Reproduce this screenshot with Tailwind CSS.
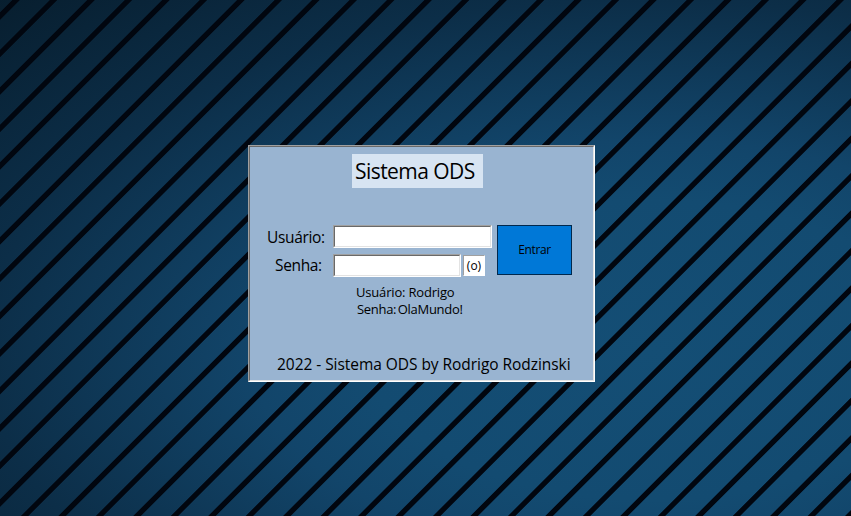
<!DOCTYPE html>
<html lang="pt-BR">
<head>
<meta charset="utf-8">
<title>Sistema ODS</title>
<script src="https://cdn.jsdelivr.net/npm/@tailwindcss/browser@4"></script>
</head>
<body class="h-screen overflow-hidden font-['Open_Sans','Noto_Sans',sans-serif] text-black bg-[repeating-linear-gradient(135deg,transparent_0px,transparent_8.3px,#01060f_9.2px,#01060f_13.6px,transparent_14.5px,transparent_26.49px),radial-gradient(950px_500px_at_650px_350px,#144e75_0%,#134b71_30%,#12456a_42%,#0c2e48_70%,#071d2d_100%)]">
<main class="ml-[248px] pt-[145px] w-[347px]">
  <form class="h-[237px] border border-t-[#a0a0a0] border-l-[#a0a0a0] border-r-white border-b-white">
    <div class="h-full flex flex-col bg-[#99b4d1] border border-t-[#696969] border-l-[#696969] border-r-[#e3e3e3] border-b-[#e3e3e3] whitespace-nowrap">
      <h1 class="mt-[7px] ml-[102px] w-[131px] h-[34px] pl-[3px] bg-[#d7e4f2] text-[21px] leading-[34px] tracking-[-0.55px]">Sistema ODS</h1>
      <div class="mt-[37px] flex">
        <div class="w-[83px] flex flex-col gap-[6px] text-[15.5px] tracking-[-0.35px]">
          <label class="h-[23px] pl-[17px] leading-[24px]" for="u">Usuário:</label>
          <label class="h-[23px] pl-[25px] leading-[23px]" for="s">Senha:</label>
        </div>
        <div class="flex flex-col gap-[6px]">
          <div class="w-[159px] h-[23px] border border-t-[#a0a0a0] border-l-[#a0a0a0] border-r-white border-b-white"><input id="u" class="block w-full h-full bg-white border border-t-[#696969] border-l-[#696969] border-r-[#e3e3e3] border-b-[#e3e3e3]"></div>
          <div class="flex items-center gap-[2px]">
            <div class="w-[128px] h-[23px] border border-t-[#a0a0a0] border-l-[#a0a0a0] border-r-white border-b-white"><input id="s" type="password" class="block w-full h-full bg-white border border-t-[#696969] border-l-[#696969] border-r-[#e3e3e3] border-b-[#e3e3e3]"></div>
            <button type="button" class="w-[22px] h-[21px] bg-white border border-t-[#a0a0a0] border-l-[#a0a0a0] border-r-white border-b-white text-[12px] leading-[18px]">(o)</button>
          </div>
        </div>
        <button type="button" class="ml-[5px] w-[75px] h-[50px] bg-[#0078d7] border border-[#00284d] text-[12px] leading-[48px] tracking-[-0.4px]">Entrar</button>
      </div>
      <div class="mt-[7px] text-[13px] leading-[17px]">
        <p class="pl-[106px] tracking-[-0.18px]">Usuário: Rodrigo</p>
        <p class="pl-[107px] tracking-[-0.3px] [word-spacing:-1.5px]">Senha: OlaMundo!</p>
      </div>
      <p class="mt-[36px] pl-[27px] text-[15.5px] leading-[20px] tracking-[-0.05px]">2022 - Sistema ODS by Rodrigo Rodzinski</p>
    </div>
  </form>
</main>
</body>
</html>
